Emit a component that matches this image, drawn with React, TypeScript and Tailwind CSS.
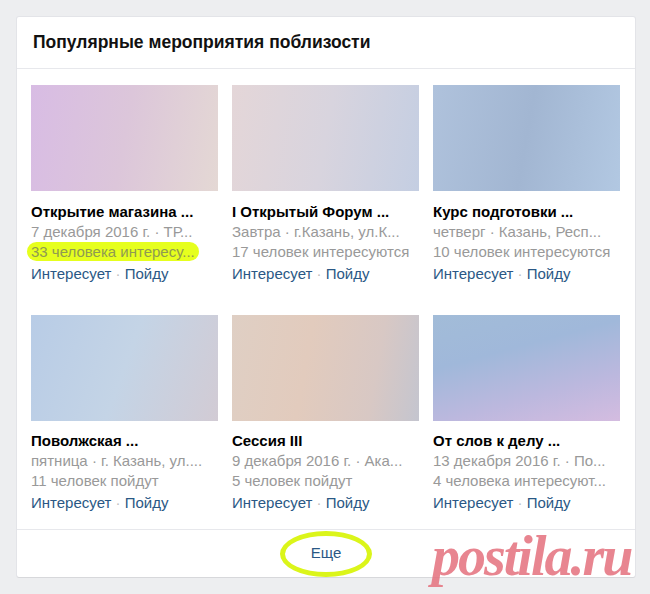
import React from "react";

type Ev = { title: string; date: string; count: string; bg: string; hl?: boolean };

const row1: Ev[] = [
  { title: "Открытие магазина ...", date: "7 декабря 2016 г. · ТР...", count: "33 человека интересу...", bg: "bg-[linear-gradient(100deg,#d8bce4_0%,#dcc6da_50%,#e4d8d4_100%)]", hl: true },
  { title: "I Открытый Форум ...", date: "Завтра · г.Казань, ул.К...", count: "17 человек интересуются", bg: "bg-[linear-gradient(100deg,#e4d6d8_0%,#d8d4de_50%,#c4cee2_100%)]" },
  { title: "Курс подготовки ...", date: "четверг · Казань, Респ...", count: "10 человек интересуются", bg: "bg-[linear-gradient(100deg,#afc2dc_0%,#a2b6d2_50%,#b2c8e2_100%)]" },
];
const row2: Ev[] = [
  { title: "Поволжская ...", date: "пятница · г. Казань, ул....", count: "11 человек пойдут", bg: "bg-[linear-gradient(110deg,#b8cce6_0%,#c4d4e6_50%,#d2cbd4_100%)]" },
  { title: "Сессия III", date: "9 декабря 2016 г. · Ака...", count: "5 человек пойдут", bg: "bg-[linear-gradient(100deg,#dfcfc4_0%,#e2cbbd_40%,#d8c8c4_75%,#c4c5cf_100%)]" },
  { title: "От слов к делу ...", date: "13 декабря 2016 г. · По...", count: "4 человека интересуют...", bg: "bg-[linear-gradient(165deg,#a2bcd8_0%,#a0b8da_35%,#bcb8de_70%,#d4bce0_100%)]" },
];

function Item({ e, first }: { e: Ev; first: boolean }) {
  return (
    <div className="w-[187px]">
      <div className={`h-[106px] w-full ${e.bg}`} />
      <div className={`${first ? "mt-[11px]" : "mt-[10px]"} text-[15px] leading-[20px] font-bold text-black whitespace-nowrap`}>{e.title}</div>
      <div className="text-[15px] leading-[20px] text-[#999] whitespace-nowrap">{e.date}</div>
      <div className="text-[15px] leading-[20px] whitespace-nowrap">
        {e.hl ? (
          <span className="ml-[-4px] rounded-[10px] bg-[#e6ff1e] px-[4px] py-[1px] text-[#8f9a52]">{e.count}</span>
        ) : (
          <span className="text-[#999]">{e.count}</span>
        )}
      </div>
      <div className="mt-[2px] text-[15px] leading-[20px] whitespace-nowrap text-[#2a5885]">
        Интересует <span className="text-[#c0c0c0]">·</span> Пойду
      </div>
    </div>
  );
}

export default function App() {
  return (
    <div className="relative h-[594px] w-[650px] overflow-hidden bg-[#edeef0] pt-[17px] pl-[17px] font-['Liberation_Sans',Arial,sans-serif]">
      <div className="w-[618px] rounded-[2px] bg-white shadow-[0_1px_0_0_#d7d8db,0_0_0_1px_#e3e4e8]">
        <div className="flex h-[52px] items-center border-b border-[#e7e8ec] pl-[16px] text-[17.5px] font-bold text-[#111]">
          Популярные мероприятия поблизости
        </div>
        <div className="px-[14px] pt-[16px] pb-[16px]">
          <div className="flex gap-[14px]">
            {row1.map((e, i) => (
              <Item key={i} e={e} first />
            ))}
          </div>
          <div className="mt-[31px] flex gap-[14px]">
            {row2.map((e, i) => (
              <Item key={i} e={e} first={false} />
            ))}
          </div>
        </div>
        <div className="flex h-[48px] items-center justify-center border-t border-[#e7e8ec]">
          <span className="relative text-[15px] text-[#2a5885]">
            Еще
            <span className="absolute left-1/2 top-1/2 h-[46px] w-[92px] -translate-x-1/2 -translate-y-1/2 rounded-[50%] border-[5px] border-[#dbf51a]" />
          </span>
        </div>
      </div>
      <div className="absolute left-[432px] top-[528px] text-[56px] font-bold italic leading-none text-[#e4707c]/85 font-['Liberation_Serif',serif] tracking-[-2px]">
        postila.ru
      </div>
    </div>
  );
}
